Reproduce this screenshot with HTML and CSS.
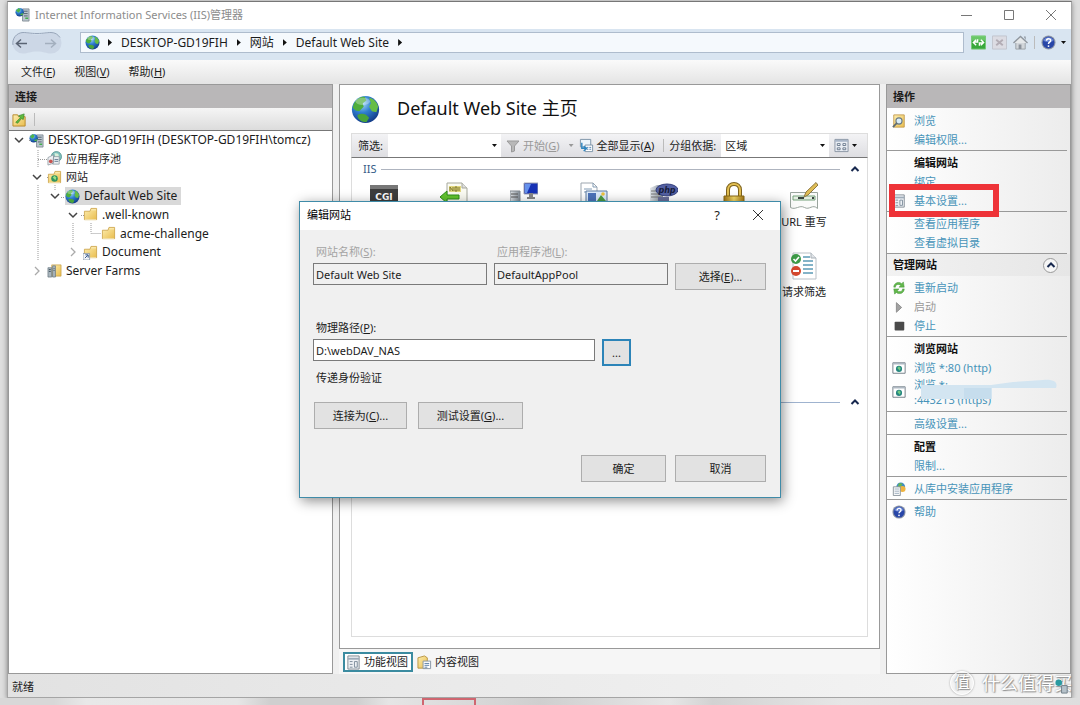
FILE: index.html
```html
<!DOCTYPE html>
<html lang="zh-CN">
<head>
<meta charset="utf-8">
<title>Internet Information Services (IIS)管理器</title>
<link rel="stylesheet" href="styles.css">
</head>
<body>
<svg class="defs" aria-hidden="true">
  <defs>
    <radialGradient id="sea" cx="38%" cy="28%" r="75%">
      <stop offset="0" stop-color="#a9dcf5"/><stop offset=".45" stop-color="#2f7fd0"/><stop offset="1" stop-color="#123a86"/>
    </radialGradient>
    <linearGradient id="fold" x2="1" y2="1"><stop offset="0" stop-color="#fdeeb0"/><stop offset="1" stop-color="#e9bd4e"/></linearGradient>
    <linearGradient id="gold" x2="1"><stop offset="0" stop-color="#a87a14"/><stop offset=".5" stop-color="#f7dc6a"/><stop offset="1" stop-color="#a87a14"/></linearGradient>
    <linearGradient id="metal" x2="1"><stop offset="0" stop-color="#e4e8ec"/><stop offset="1" stop-color="#7e8892"/></linearGradient>
  </defs>
  <symbol id="globe" viewBox="0 0 32 32">
    <circle cx="16" cy="16" r="15" fill="url(#sea)"/>
    <path d="M3 10C6 4 11 2 15 2l2 4-4 3 1 4-5 5-4-1-3-3z" fill="#4fae3c"/>
    <path d="M20 3c5 1 9 5 10 10l-2 6-5-1-3-5 2-4z" fill="#66bd45"/>
    <path d="M7 22c5-3 10-1 13 3l-3 5c-5 0-10-3-10-8z" fill="#49a43a"/>
    <ellipse cx="13" cy="7" rx="8" ry="4" fill="#fff" opacity=".3"/>
  </symbol>
  <symbol id="folder" viewBox="0 0 16 16">
    <path d="M1.500 4.500h6l1-3h6v12h-13z" fill="url(#fold)" stroke="#c79c3d" stroke-width=".8"/>
    <path d="M9 3h5M2 13.500h12" stroke="#fff6cc" stroke-width=".8"/>
  </symbol>
  <symbol id="server" viewBox="0 0 16 16">
    <path d="M8 2h7v13H8z" fill="#b9c4cd" stroke="#75818b" stroke-width=".8"/>
    <path d="M9.500 4.500h4M9.500 7h4M9.500 9.500h4" stroke="#53616d"/>
    <path d="M11 12h3" stroke="#3cae45" stroke-width="1.500"/>
    <circle cx="5" cy="5.500" r="4.500" fill="url(#sea)"/>
    <path d="M1 4l3-3 2 2-2 3zM5 8l4-2-1 3z" fill="#4fb548"/>
  </symbol>
  <symbol id="pool" viewBox="0 0 16 16">
    <circle cx="10" cy="6" r="5.500" fill="#7ec0bd" stroke="#3d837e" stroke-width=".7"/>
    <path d="M8 2l4 1 1 4-4 1z" fill="#d8efdb"/>
    <path d="M1 7l6-3v9l-6 2zM7 6h6v8H6z" fill="#eef1f4" stroke="#8a949c" stroke-width=".8"/>
    <circle cx="4" cy="11" r="2" fill="#c75450"/><path d="M8 9h4M8 11h4" stroke="#60788f"/>
  </symbol>
  <symbol id="sites" viewBox="0 0 16 16">
    <use href="#folder"/><circle cx="8" cy="9" r="3.500" fill="#2f9462"/><path d="M6 8l2-2 2 2-1 3z" fill="#9be07f"/>
  </symbol>
  <symbol id="shortcut" viewBox="0 0 16 16">
    <use href="#folder"/><path d="M0 9h7v7H0z" fill="#f5f7fa" stroke="#70839b" stroke-width=".7"/><path d="M2 14l3-3M2.500 10.500H5.500v3" fill="none" stroke="#294f88"/>
  </symbol>
  <symbol id="farm" viewBox="0 0 16 16">
    <path d="M5 2h10v12H5z" fill="url(#fold)" stroke="#c79c3d" stroke-width=".7"/>
    <path d="M1 5h4v10H1zM6 3h3v12H6z" fill="#aab6be" stroke="#5f6e78" stroke-width=".7"/>
    <path d="M2 7h2M2 9h2M7 6h1M7 8h1" stroke="#3f515d"/>
  </symbol>
  <symbol id="chev" viewBox="0 0 12 12"><path d="M2 4l4 4 4-4" fill="none" stroke="#444" stroke-width="1.500"/></symbol>
  <symbol id="chev-r" viewBox="0 0 12 12"><path d="M4 2l4 4-4 4" fill="none" stroke="#aaa" stroke-width="1.300"/></symbol>
  <symbol id="chev-u" viewBox="0 0 12 12"><path d="M2.500 8L6 4.500 9.500 8" fill="none" stroke="#17284e" stroke-width="2"/></symbol>
  <symbol id="help" viewBox="0 0 16 16">
    <circle cx="8" cy="8" r="7.500" fill="#8e96a6"/><circle cx="8" cy="8" r="6.300" fill="#2846a8"/>
    <path d="M2.500 6a6 6 0 0 1 11 0c-3 2-8 2-11 0z" fill="#7f9be4" opacity=".7"/>
    <path d="M5.800 6.200c0-3 4.500-3 4.500-.4C10.300 7.700 8 7.600 8 9.500" fill="none" stroke="#fff" stroke-width="1.600"/><circle cx="8" cy="11.800" r="1" fill="#fff"/>
  </symbol>
  <symbol id="webwin" viewBox="0 0 16 16">
    <path d="M1 2h14v12H1z" fill="#fff" stroke="#68737d"/><path d="M1 3h14" stroke="#aeb8c2" stroke-width="2"/>
    <circle cx="8" cy="9" r="3.500" fill="#24857f"/><path d="M6 8l2-2 2 2-1 3z" fill="#72cb83"/>
  </symbol>
  <symbol id="sheet" viewBox="0 0 16 16">
    <path d="M2 1h12v14H2z" fill="#eef1f5" stroke="#7e8790"/><path d="M2 4h12" stroke="#9eabb8" stroke-width="2"/>
    <path d="M4 7h3M4 10h3M4 13h3M9 7h3v6H9z" fill="none" stroke="#7b8a99"/>
  </symbol>
</svg>

<div class="window">
  <header class="titlebar">
    <svg class="i16"><use href="#server"/></svg>
    <h1>Internet Information Services (IIS)管理器</h1>
    <div class="winbtns">
      <button aria-label="最小化"><svg viewBox="0 0 12 12"><path d="M0 6.500h11"/></svg></button>
      <button aria-label="最大化"><svg viewBox="0 0 12 12"><path d="M1.500 1.500h9v9h-9z"/></svg></button>
      <button aria-label="关闭"><svg viewBox="0 0 12 12"><path d="M1 1l10 10M11 1L1 11"/></svg></button>
    </div>
  </header>

  <nav class="navbar">
    <svg class="backfwd" viewBox="0 0 52 24">
      <path d="M12 1.500c5 0 7 2 14 2s9-2 14-2a10.500 10.500 0 0 1 0 21c-5 0-7-2-14-2s-9 2-14 2a10.500 10.500 0 0 1 0-21z" fill="#ccd7e6"/>
      <path d="M2 14a10.500 10.500 0 0 1 10-12.500c5 0 7 1 14 1s9-1 14-1c4 0 7 2 9 5" fill="none" stroke="#98a6ba"/>
      <path d="M16 12.500H6m4-4l-4.500 4 4.500 4" fill="none" stroke="#596373" stroke-width="1.500"/>
      <path d="M34 12.500h10m-4-4l4.500 4-4.500 4" fill="none" stroke="#a3afbe" stroke-width="1.500"/>
    </svg>
    <div class="address">
      <svg class="i16"><use href="#globe"/></svg>
      <i class="arrow"></i><a href="#">DESKTOP-GD19FIH</a>
      <i class="arrow"></i><a href="#">网站</a>
      <i class="arrow"></i><a href="#">Default Web Site</a>
      <i class="arrow"></i>
    </div>
    <div class="navicons">
      <button aria-label="刷新"><svg class="i16" viewBox="0 0 16 16"><path d="M.5 1h15v14H.5z" fill="#38a83c" stroke="#76c878"/><path d="M1 1h14v5H1z" fill="#8bdc86" opacity=".6"/><path d="M7 4.500v3H3.500M5.500 5L2.500 8l3 3M9 11.500v-3h3.500M10.500 11l3-3-3-3" fill="none" stroke="#fff" stroke-width="1.500"/></svg></button>
      <button aria-label="停止加载"><svg class="i16" viewBox="0 0 16 16"><path d="M.5 1h15v14H.5z" fill="#dcdce3" stroke="#c1c4cd"/><path d="M4.500 5l7 6M11.500 5l-7 6" stroke="#b3adb5" stroke-width="2"/></svg></button>
      <button aria-label="主页"><svg class="i16" viewBox="0 0 16 16"><path d="M3 8h10v7H3z" fill="#d2d6da" stroke="#9ba1a8"/><path d="M.5 8.500L8 1.500l7.500 7" fill="#e5e8ea" stroke="#8f969e" stroke-width="1.500"/><path d="M6 10h3v5H6zM11.500 1.500h2v4" fill="#8b929b"/></svg></button>
      <span class="sep"></span>
      <button aria-label="帮助"><svg class="i16"><use href="#help"/></svg></button>
      <i class="caret"></i>
    </div>
  </nav>

  <nav class="menubar">
    <button>文件(<u>F</u>)</button><button>视图(<u>V</u>)</button><button>帮助(<u>H</u>)</button>
  </nav>

  <main class="main">
    <section class="pane left">
      <h2 class="pane-title">连接</h2>
      <div class="lefttools">
        <button aria-label="连接"><svg class="i16" viewBox="0 0 16 16"><path d="M1 3h5l1 2h7v10H1z" fill="url(#fold)" stroke="#b8892c"/><path d="M4 11l5-5-2-2 6-2-1 6-2-1-4 5z" fill="#5fba3e" stroke="#35862a" stroke-width=".7"/></svg></button>
        <span class="sep"></span>
      </div>
      <div class="treewrap">
        <svg class="lines" viewBox="0 0 160 150"><path d="M29 19v18M29 54v76M29 28.500h9M20 9.500h4M46 54v5M64 92v20M82 92v10.500h10M38 46.500h3M52 66.500h5M72 84.500h4" /></svg>
        <ul class="tree">
          <li class="l0"><svg class="i12"><use href="#chev"/></svg><svg class="i16"><use href="#server"/></svg><span>DESKTOP-GD19FIH (DESKTOP-GD19FIH\tomcz)</span></li>
          <li class="l1"><i class="i12"></i><svg class="i16"><use href="#pool"/></svg><span class="cjk">应用程序池</span></li>
          <li class="l1"><svg class="i12"><use href="#chev"/></svg><svg class="i16"><use href="#sites"/></svg><span class="cjk">网站</span></li>
          <li class="l2 selected"><svg class="i12"><use href="#chev"/></svg><div><svg class="i16"><use href="#globe"/></svg><span>Default Web Site</span></div></li>
          <li class="l3"><svg class="i12"><use href="#chev"/></svg><svg class="i16"><use href="#folder"/></svg><span>.well-known</span></li>
          <li class="l4"><i class="i12"></i><svg class="i16"><use href="#folder"/></svg><span>acme-challenge</span></li>
          <li class="l3"><svg class="i12"><use href="#chev-r"/></svg><svg class="i16"><use href="#shortcut"/></svg><span>Document</span></li>
          <li class="l1"><svg class="i12"><use href="#chev-r"/></svg><svg class="i16"><use href="#farm"/></svg><span>Server Farms</span></li>
        </ul>
      </div>
    </section>

    <section class="center">
      <div class="home">
        <header class="homehead">
          <svg class="i30"><use href="#globe"/></svg>
          <h2>Default Web Site 主页</h2>
        </header>
        <div class="toolbar">
          <label for="filter">筛选:</label>
          <span class="combo filter"><select id="filter"><option></option></select><i class="caret"></i></span>
          <button class="off"><svg class="i14" viewBox="0 0 14 14"><path d="M1 2h12L8.500 7v5L5.500 13V7z" fill="#b8b8b8" stroke="#999"/></svg><span>开始(<u>G</u>)</span></button><i class="caret pale"></i>
          <button><svg class="i16" viewBox="0 0 16 16"><path d="M1.500 1.500h11v8h-11z" fill="#eef5fb" stroke="#7c93a8"/><path d="M6.500 7.500h8v7h-8z" fill="#fff" stroke="#7c93a8"/><path d="M8 10h2M11 10h2M8 12h2M11 12h2" stroke="#4c7fb1"/><path d="M3 5v6h4M5 9l3 2-3 3" fill="none" stroke="#2e86c1" stroke-width="1.500"/></svg><span>全部显示(<u>A</u>)</span></button>
          <span class="sep wide"></span>
          <label for="group">分组依据:</label>
          <span class="combo group"><select id="group"><option>区域</option></select><i class="caret"></i></span>
          <button class="view" aria-label="视图"><svg class="i16" viewBox="0 0 16 16"><path d="M1 1.500h14v13H1z" fill="#e9edf3" stroke="#8793a2"/><path d="M1 3h14" stroke="#a9b6c8" stroke-width="2"/><path d="M3.500 6h3v2h-3zM9.500 6h3v2h-3zM3.500 10.500h3v2h-3zM9.500 10.500h3v2h-3z" fill="#fff" stroke="#67778c"/></svg><i class="caret"></i></button>
        </div>
        <div class="features">
          <div class="sec"><span>IIS</span><hr><svg class="i12"><use href="#chev-u"/></svg></div>
          <div class="grid">
            <div class="feat"><svg viewBox="0 0 28 28"><path d="M0 3h28v22H0z" fill="#3d3d3d"/><path d="M0 3h28v4H0z" fill="#777"/><text x="14" y="18" text-anchor="middle" class="cgi">CGI</text></svg></div>
            <div class="feat"><svg viewBox="0 0 28 28"><path d="M7 1h15l5 5v20H7z" fill="#fbfbf3" stroke="#a7a99d"/><path d="M22 1v5h5" fill="#ddd" stroke="#a7a99d"/><path d="M9 4h12v6H9z" fill="#e2d780"/><path d="M10 9V5l3 4V5M15 5h2v4h-2zM19 5v4" fill="none" stroke="#7f7931"/><path d="M0 15l7-6v4h12v4H7v4z" fill="#63c52f" stroke="#2e8d1b"/></svg></div>
            <div class="feat"><svg viewBox="0 0 28 28"><path d="M0 9h10v15H0z" fill="url(#metal)" stroke="#828990"/><path d="M1 12h7M1 15h7" stroke="#555"/><path d="M14 1h14v11H14z" fill="#1732b5" stroke="#a4a8b5"/><path d="M15 2h6l-4 9h-2z" fill="#6591ec"/><path d="M20 12h2v4h-2zM17 16h8" stroke="#888" stroke-width="2"/></svg></div>
            <div class="feat"><svg viewBox="0 0 28 28"><path d="M1 1h12l4 4v21H1z" fill="#fff" stroke="#9da6af"/><path d="M13 1v4h4M4 7h8M4 10h8" fill="none" stroke="#829cb5"/><path d="M6 9h21v14H6z" fill="#dceafa" stroke="#5c7ba1"/><path d="M8 11h8v9H8z" fill="#4d73ba"/><path d="M17 19l4-6 5 6z" fill="#4c9d42"/><circle cx="23" cy="12" r="1.800" fill="#edc13c"/></svg></div>
            <div class="feat"><svg viewBox="0 0 28 28"><path d="M0 6l7-3h6v23H0z" fill="url(#metal)"/><path d="M1 9h10M1 12h10M1 15h10" stroke="#777"/><path d="M8 15h11v11H8z" fill="#686e9a"/><ellipse cx="17" cy="8" rx="11" ry="6" fill="#5360a3" stroke="#323e7c"/><text x="17" y="11" text-anchor="middle" class="php">php</text></svg></div>
            <div class="feat"><svg viewBox="0 0 28 28"><path d="M8 15V8c0-8 12-8 12 0v7" fill="none" stroke="#7d621d" stroke-width="4"/><path d="M8 15V8c0-8 12-8 12 0v7" fill="none" stroke="#e3bf51" stroke-width="2"/><path d="M4 14h20v13H4z" fill="url(#gold)" stroke="#8a6a19"/></svg></div>
            <div class="feat"><svg viewBox="0 0 28 28"><path d="M.5 10.500h27v16c-5-5-8 2-13-1-5-3-9 3-14 0z" fill="#fafbfa" stroke="#9aa59e"/><path d="M3 14h22v4H3z" fill="#e4eee3" stroke="#75a17b"/><path d="M8 16h6M22 16h2" stroke="#3a4440" stroke-width="2"/><path d="M14 15l2-5L26 .5l2 2.500L18 13z" fill="#dfbd55" stroke="#8e7844"/></svg><span>URL 重写</span></div>
            <div class="feat last"><svg viewBox="0 0 28 28"><path d="M3 1h18l5 5v21H3z" fill="#fff" stroke="#bac1c7"/><path d="M21 1v5h5" fill="#e0e4e8" stroke="#a9b1b8"/><path d="M13 5h7M13 9h10M13 13h10M13 17h10M13 21h10" stroke="#5b9bb6" stroke-width="1.500"/><circle cx="6" cy="7" r="5" fill="#3d9b47"/><path d="M3.500 7l2 2L9 5" fill="none" stroke="#fff" stroke-width="1.600"/><circle cx="6" cy="19" r="5" fill="#d5482e"/><path d="M3 19h6" stroke="#fff" stroke-width="2"/></svg><span>请求筛选</span></div>
          </div>
          <div class="sec second"><hr><svg class="i12"><use href="#chev-u"/></svg></div>
        </div>
      </div>
      <div class="tabs">
        <button class="on"><svg class="i16"><use href="#sheet"/></svg>功能视图</button>
        <button><svg class="i16" viewBox="0 0 16 16"><path d="M1 3l7-2 3 2v11H1z" fill="url(#fold)" stroke="#b99543"/><path d="M6.500 6.500h8v8h-8z" fill="#fff" stroke="#8594a3"/><path d="M8 9h5M8 11h5M8 13h3" stroke="#567da5"/></svg>内容视图</button>
      </div>
    </section>

    <aside class="pane right">
      <h2 class="pane-title">操作</h2>
      <div class="acts">
        <div class="grp">
          <a href="#"><svg class="i14" viewBox="0 0 16 16"><path d="M2 1h12v14H2z" fill="url(#fold)" stroke="#c3994a"/><circle cx="8" cy="8" r="3.500" fill="#dbeef8" stroke="#6a7b88" stroke-width="1.300"/><path d="M5.500 10.500L1 15" stroke="#5d6a74" stroke-width="2"/></svg>浏览</a>
          <a href="#">编辑权限...</a>
        </div>
        <div class="grp">
          <h3>编辑网站</h3>
          <a href="#">绑定</a>
          <a href="#" class="marked"><svg class="i14"><use href="#sheet"/></svg>基本设置...<i class="redbox"></i></a>
        </div>
        <div class="grp">
          <a href="#">查看应用程序</a>
          <a href="#">查看虚拟目录</a>
        </div>
        <div class="sub"><h3>管理网站</h3><button aria-label="折叠"><svg class="i12"><use href="#chev-u"/></svg></button></div>
        <div class="grp">
          <a href="#"><svg class="i14" viewBox="0 0 16 16"><path d="M2 7c0-5 6-7 9-4l2-2 1 6H8l2-2C7 3 4 4 4 7zM14 9c0 5-6 7-9 4l-2 2-1-6h6l-2 2c3 2 6 1 6-2z" fill="#62b84b" stroke="#3f8d35" stroke-width=".5"/></svg>重新启动</a>
          <a href="#" class="off"><svg class="i14" viewBox="0 0 16 16"><path d="M5 3l6 5.500L5 14z" fill="#a2a2a2" stroke="#888"/></svg>启动</a>
          <a href="#"><svg class="i14" viewBox="0 0 16 16"><rect x="3" y="3" width="11" height="10" rx="1" fill="#4a4a4a"/></svg>停止</a>
        </div>
        <div class="grp">
          <h3>浏览网站</h3>
          <a href="#"><svg class="i14"><use href="#webwin"/></svg>浏览 *:80 (http)</a>
          <a href="#" class="two"><svg class="i14"><use href="#webwin"/></svg><span>浏览 *:<br>:443213 (https)</span>
            <svg class="smudge" viewBox="0 0 150 24"><path d="M7 6h70l22-3 30-2c12-1 15 3 13 8H78v11H7z" fill="#d3e5f1"/><path d="M50 9h27v11H50z" fill="#c6dded"/></svg></a>
        </div>
        <div class="grp"><a href="#">高级设置...</a></div>
        <div class="grp"><h3>配置</h3><a href="#">限制...</a></div>
        <div class="grp"><a href="#"><svg class="i14" viewBox="0 0 16 16"><circle cx="10" cy="5.500" r="5" fill="#3f8dc5"/><path d="M8 1l4 1-2 4-4 1z" fill="#66b653"/><circle cx="12" cy="8" r="3.500" fill="#efb340"/><path d="M1.500 5.500h8v10h-8z" fill="#f7f8fa" stroke="#858e97"/><path d="M3 8h5M3 10.500h5M3 13h5" stroke="#9aabbc"/></svg>从库中安装应用程序</a></div>
        <div class="grp"><a href="#"><svg class="i14"><use href="#help"/></svg>帮助</a></div>
      </div>
    </aside>
  </main>

  <footer class="status"><span>就绪</span></footer>
</div>

<div class="behind"><i></i></div>

<div class="watermark"><span class="wm-badge">值</span><span class="wm-text">什么值得买</span>
  <svg class="i16 grip" viewBox="0 0 16 16"><circle cx="4" cy="4" r="3.500" fill="#2b9aa0"/><path d="M7 7h6v8H7z" fill="#b6c2ca" stroke="#6f7d86"/></svg></div>

<div class="dialog" role="dialog" aria-labelledby="dlg-title">
  <header><h2 id="dlg-title">编辑网站</h2>
    <button aria-label="帮助">?</button>
    <button aria-label="关闭"><svg viewBox="0 0 12 12"><path d="M1 1l10 10M11 1L1 11"/></svg></button></header>
  <form>
    <div class="row top">
      <p class="dis site"><label for="site">网站名称(<u>S</u>):</label><input id="site" value="Default Web Site" readonly></p>
      <p class="dis site"><label for="pool-name">应用程序池(<u>L</u>):</label><input id="pool-name" value="DefaultAppPool" readonly></p>
      <button type="button" class="w91">选择(<u>E</u>)...</button>
    </div>
    <div class="row path">
      <p><label for="path">物理路径(<u>P</u>):</label><input id="path" value="D:\webDAV_NAS"></p>
      <button type="button" class="browse">...</button>
    </div>
    <p class="note">传递身份验证</p>
    <div class="row auth">
      <button type="button" class="w93">连接为(<u>C</u>)...</button>
      <button type="button" class="w105">测试设置(<u>G</u>)...</button>
    </div>
    <div class="row ok">
      <button type="button" class="w85">确定</button>
      <button type="button" class="w91">取消</button>
    </div>
  </form>
</div>
</body>
</html>
```
FILE: styles.css
```css
* { box-sizing: border-box; }
body {
  margin: 0;
  min-height: 100vh;
  display: flex;
  flex-direction: column;
  background: #dedede;
  color: #1c1c1c;
  font: 11px/18px "Noto Sans", "Noto Sans CJK SC", sans-serif;
}
h1, h2, h3, p, ul { margin: 0; padding: 0; font-size: inherit; }
button, input, select { font: inherit; color: inherit; }
button { border: 0; padding: 0; background: none; display: flex; align-items: center; white-space: nowrap; }
a { color: inherit; text-decoration: none; }
svg { display: block; flex: none; }
u { text-underline-offset: 1px; }
.defs { position: absolute; width: 0; height: 0; }
.i12 { width: 12px; height: 12px; flex: none; }
.i14 { width: 14px; height: 14px; }
.i16 { width: 15px; height: 15px; }
.i30 { width: 29px; height: 29px; }
.caret { width: 5px; height: 3px; flex: none; background: #111; clip-path: polygon(0 0, 100% 0, 50% 100%); }
.caret.pale { background: #999; }
.arrow { width: 4px; height: 7px; flex: none; background: #111; clip-path: polygon(0 0, 100% 50%, 0 100%); }
.sep { width: 1px; height: 13px; background: #bbb; }

.window {
  flex: 1;
  display: flex;
  flex-direction: column;
  margin: 1px 8px 0 7px;
  border: 1px solid #a5a5a5;
  border-top-color: #777;
  background: #f0f0f0;
  box-shadow: 0 1px 5px #888;
}
.titlebar { display: flex; align-items: center; gap: 5px; height: 27px; padding: 0 0 2px 7px; background: #fff; }
.titlebar h1 { flex: 1; font-weight: 400; color: #8c8c8c; }
.winbtns { display: flex; gap: 30px; padding-right: 14px; }
.winbtns svg { width: 12px; height: 12px; fill: none; stroke: #777; }
.navbar { display: flex; align-items: center; height: 31px; padding: 0 5px 4px 3px; background: #d9e5f1; }
.backfwd { width: 52px; height: 24px; }
.address {
  flex: 1; display: flex; align-items: center; gap: 9px; height: 21px;
  margin-left: 17px; padding-left: 4px; background: #f5f9fd; border: 1px solid #aebccd; font-size: 12px;
}
.address .i16 { margin-right: -1px; }
.navicons { display: flex; align-items: center; gap: 6px; padding-left: 7px; }
.navicons .caret { margin-left: -1px; }
.menubar {
  display: flex; align-items: center; gap: 19px; height: 24px; padding-left: 13px;
  background: linear-gradient(#fafafa, #e4e4e4);
}
.main { flex: 1; display: grid; grid-template-columns: 325px minmax(0, 1fr) 185px; column-gap: 6px; }
.pane { border: 1px solid #999; display: flex; flex-direction: column; }
.pane-title { height: 23px; padding: 0 6px; line-height: 23px; background: #b9b7b8; font-weight: 700; }
.left { background: #fff; }
.lefttools {
  display: flex; align-items: center; gap: 7px; height: 23px; padding: 0 3px;
  background: linear-gradient(#f5f5f5, #dcdcdc); border-bottom: 1px solid #777;
}
.treewrap { position: relative; }
.lines { position: absolute; left: 0; top: 0; width: 160px; height: 150px; fill: none; stroke: #999; stroke-dasharray: 1 1; }
.tree { position: relative; display: flex; flex-direction: column; justify-content: space-between; height: 149px; list-style: none; }
.tree li, .tree div { display: flex; align-items: center; gap: 4px; height: 18px; font-size: 12px; white-space: nowrap; }
.tree li { padding-left: 4px; }
.tree .cjk { font-size: 11px; }
.tree .l1 { padding-left: 22px; }
.tree .l2 { padding-left: 40px; }
.tree .l3 { padding-left: 58px; }
.tree .l4 { padding-left: 76px; }
.selected div { background: #d9d9d9; padding-right: 4px; }

.center { display: flex; flex-direction: column; min-width: 0; background: #f6f6f6; }
.home { flex: 1; display: flex; flex-direction: column; padding: 0 11px 11px; background: #fff; border: 1px solid #999; }
.homehead { display: flex; align-items: center; gap: 17px; height: 48px; }
.homehead h2 { padding-bottom: 3px; font-size: 18px; font-weight: 400; line-height: 24px; color: #111; }
.toolbar {
  display: flex; align-items: center; gap: 5px; height: 25px; padding: 0 0 0 6px;
  background: linear-gradient(#f3f3f5, #dedee2); border: 1px solid #ddd; border-bottom-color: #777; white-space: nowrap;
}
.toolbar button { gap: 3px; }
.toolbar .off { color: #999; padding-right: 4px; }
.toolbar .wide { margin-left: 4px; }
.combo { display: flex; align-items: center; align-self: stretch; padding-right: 4px; background: #fff; }
.combo select { flex: 1; min-width: 0; border: 0; background: none; appearance: none; padding: 0 4px; }
.filter { width: 113px; }
.group { flex: 1; }
.toolbar .view { padding-right: 10px; }
.features { flex: 1; border: 1px solid #ddd; border-top: 0; }
.sec { display: flex; align-items: center; gap: 4px; height: 22px; padding: 0 6px 0 11px; color: #355a86; }
.sec hr { flex: 1; margin: 0 5px 0 0; border: 0; border-top: 1px solid #aeb4bf; }
.grid { display: grid; grid-template-columns: repeat(7, 70px); grid-auto-rows: 70px; margin-left: -3px; }
.feat { display: flex; flex-direction: column; align-items: center; gap: 3px; padding-top: 2px; }
.feat svg { width: 28px; height: 28px; }
.cgi { font: 700 9px "DejaVu Sans", sans-serif; fill: #fff; }
.php { font: italic 700 8px "DejaVu Sans", sans-serif; fill: #171d3c; }
.feat.last { grid-column: 7; }
.second { margin-top: 71px; }
.second hr { border-color: #9fb3cf; }
.tabs { display: flex; gap: 2px; padding: 3px 4px 2px; }
.tabs button { height: 20px; gap: 3px; padding: 0 4px 0 2px; }
.tabs .on { border: 2px solid #3b8ba0; padding: 0 3px 0 1px; background: #fff; }

.right { background: linear-gradient(90deg, #fff, #ececec); }
.acts { padding-top: 1px; color: #4794b9; }
.grp { margin-right: 3px; padding: 2px 0 1px 5px; border-bottom: 1px solid #999; }
.grp:last-child { border: 0; }
.grp a, .grp h3 { position: relative; display: flex; align-items: center; gap: 8px; height: 19px; padding-left: 22px; white-space: nowrap; }
.grp a:has(> .i14) { padding-left: 0; }
.acts h3 { color: #111; font-weight: 700; }
.grp a.off { color: #999; }
.grp a.two { height: 33px; padding-bottom: 4px; line-height: 15px; }
.redbox { position: absolute; left: -3px; top: -7px; width: 110px; height: 33px; border: 6px solid #ee3338; }
.smudge { position: absolute; left: 22px; top: 2px; width: 150px; height: 24px; }
.sub { display: flex; align-items: center; justify-content: space-between; height: 22px; padding: 0 12px 0 6px; background: linear-gradient(90deg, #f2f2f2, #e6e6e6); }
.sub button { width: 15px; height: 15px; justify-content: center; border: 1px solid #999; border-radius: 50%; background: #f6f6f6; }

.status { display: flex; align-items: center; height: 23px; padding: 2px 0 0 4px; background: linear-gradient(90deg, #e2e2e2, #f5f5f5); }
.behind { height: 7px; padding-left: 422px; background: linear-gradient(90deg, #d8d8d8 5%, #e8e8e8 8%, #e6e6e6 22%, #cfcfcf 25%, #cfcfcf 33%, #e5e5e5 36%, #cfcfcf 50%, #e6e6e6 62%, #d2d2d2 66%, #e6e6e6 78%, #dedede); }
.behind i { display: block; width: 54px; height: 7px; border: 2px solid #cf6670; border-bottom: 0; }

.watermark { position: absolute; right: 8px; bottom: 9px; display: flex; align-items: center; gap: 8px; color: #fff; text-shadow: 0 0 2px #777, 1px 1px 1px #999; }
.wm-badge { width: 24px; height: 24px; border: 1px solid #fff; border-radius: 50%; box-shadow: 0 0 2px #999; text-align: center; font-size: 16px; line-height: 21px; }
.wm-text { font-size: 18px; line-height: 26px; }
.grip { position: absolute; right: 2px; bottom: 2px; }

.dialog {
  position: absolute; left: 299px; top: 201px; width: 482px;
  border: 1px solid #3f8ba8; background: #f0f0f0; box-shadow: 2px 3px 12px rgba(0, 0, 0, .45);
}
.dialog header { display: flex; align-items: center; gap: 32px; height: 28px; padding: 0 16px 2px 7px; background: #fff; }
.dialog h2 { flex: 1; font-weight: 400; color: #000; }
.dialog header button { font-size: 13px; }
.dialog header svg { width: 12px; height: 12px; fill: none; stroke: #333; }
.dialog form { padding: 13px 14px 15px 13px; }
.row { display: flex; align-items: flex-end; gap: 7px; }
.row p { display: flex; flex-direction: column; gap: 2px; }
.row label { padding-left: 3px; }
.dis label { color: #a3a3a3; }
.row input { width: 100%; height: 22px; padding: 0 2px; border: 1px solid #7a7a7a; border-radius: 0; background: #fff; font-size: 11px; }
.dis input { background: #f0f0f0; }
.row button { justify-content: center; height: 27px; background: #e2e2e2; border: 1px solid #adadad; }
.site { width: 174px; }
.top { align-items: flex-start; }
.top button { margin-top: 20px; }
.path { margin-top: 29px; align-items: flex-start; }
.path p { width: 282px; }
.path button { margin-top: 20px; }
.row .browse { width: 29px; border: 2px solid #2c84b8; }
.note { margin: 3px 0 15px 3px; }
.auth { gap: 11px; padding-left: 1px; }
.ok { justify-content: flex-end; gap: 9px; margin-top: 26px; }
.w85 { width: 85px; }
.w91 { width: 91px; }
.w93 { width: 93px; }
.w105 { width: 105px; }
```
